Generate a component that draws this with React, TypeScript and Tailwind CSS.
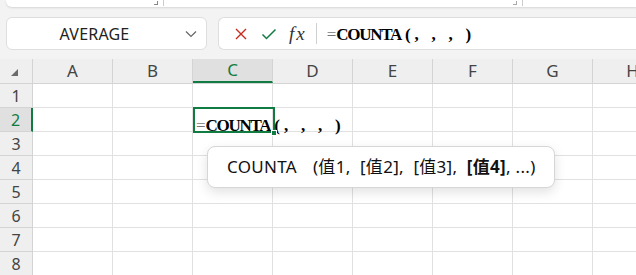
import React from "react";

const COLS = ["A", "B", "C", "D", "E", "F", "G", "H"];
const ROWS = [1, 2, 3, 4, 5, 6, 7, 8];

const SANS = "font-['Noto_Sans','Noto_Sans_CJK_SC',sans-serif]";
const SERIF = "font-['Liberation_Serif','Noto_Sans_CJK_SC',serif]";

function Formula() {
  return (
    <span className={`${SERIF} whitespace-nowrap text-[17px] leading-none text-black`}>
      <span className="font-normal text-[#777]">=</span>
      <span className="font-bold tracking-[-1.3px]">COUNTA</span>
      <span className="ml-[4px] font-bold">(</span>
      <span className="ml-[4px] inline-block w-[17px] font-bold">,</span>
      <span className="inline-block w-[17px] font-bold">,</span>
      <span className="inline-block w-[17px] font-bold">,</span>
      <span className="font-bold">)</span>
    </span>
  );
}

export default function App() {
  return (
    <div className={`relative h-[275px] w-[636px] overflow-hidden bg-[#f3f3f3] ${SANS}`}>
      {/* ribbon edge */}
      <div className="relative ml-[6px] h-[7px] rounded-bl-[6px] bg-white shadow-[0_1px_2px_rgba(0,0,0,0.12)]">
        <div className="absolute left-[148px] top-[1px] h-[4px] w-[4px] border-b border-r border-[#888]" />
        <div className="absolute left-[157px] top-0 h-[6px] w-px bg-[#ccc]" />
        <div className="absolute left-[507px] top-[1px] h-[4px] w-[4px] border-b border-r border-[#aaa]" />
        <div className="absolute left-[516px] top-0 h-[6px] w-px bg-[#ccc]" />
      </div>

      {/* name box + formula bar */}
      <div className="mt-[10px] flex h-[33px] gap-[11px] pl-[6px]">
        <div className="relative flex w-[201px] shrink-0 items-center justify-center rounded-[6px] border border-[#dedede] bg-white">
          <span className="ml-[-24px] text-[16px] tracking-[0.2px] text-[#222]">AVERAGE</span>
          <svg className="absolute right-[9px] top-[12px]" width="12" height="8" viewBox="0 0 12 8">
            <path d="M1 1.5 L6 6.5 L11 1.5" fill="none" stroke="#666" strokeWidth="1.2" />
          </svg>
        </div>
        <div className="flex flex-1 items-center rounded-l-[6px] border border-r-0 border-[#dedede] bg-white">
          <svg className="ml-[15px]" width="14" height="14" viewBox="0 0 14 14">
            <path d="M2 2 L12 12 M12 2 L2 12" stroke="#c42b1c" strokeWidth="1.4" fill="none" />
          </svg>
          <svg className="ml-[13px]" width="16" height="14" viewBox="0 0 16 14">
            <path d="M1.5 7.5 L5.5 11.5 L14.5 2.5" stroke="#107c41" strokeWidth="1.5" fill="none" />
          </svg>
          <span className="ml-[12px] font-['Liberation_Serif',serif] text-[19px] italic leading-none text-[#333]">
            f<span className="ml-[2px]">x</span>
          </span>
          <div className="ml-[11px] h-[21px] w-px bg-[#cfcfcf]" />
          <div className="ml-[10px] pt-[1px]">
            <Formula />
          </div>
        </div>
      </div>

      {/* grid */}
      <div className="mt-[9px]">
        <div className="flex h-[25px] border-b border-[#d4d4d4] bg-[#efefef]">
          <div className="relative w-[33px] shrink-0 border-r border-[#d4d4d4]">
            <svg className="absolute left-[11px] top-[10px]" width="7" height="7" viewBox="0 0 7 7">
              <path d="M7 0 L7 7 L0 7 Z" fill="#6b6b6b" />
            </svg>
          </div>
          {COLS.map((c) => (
            <div
              key={c}
              className={`flex w-[80px] shrink-0 items-center justify-center border-r border-[#d4d4d4] text-[17px] ${
                c === "C" ? "border-b-2 border-b-[#107c41] bg-[#e0e0e0] text-[#107c41]" : "text-[#444]"
              }`}
            >
              {c}
            </div>
          ))}
        </div>
        {ROWS.map((r) => (
          <div key={r} className="flex h-[24px]">
            <div
              className={`flex w-[33px] shrink-0 items-center justify-center border-b border-r border-[#d4d4d4] text-[16px] ${
                r === 2 ? "border-r-2 border-r-[#107c41] bg-[#e0e0e0] text-[#107c41]" : "bg-[#efefef] text-[#444]"
              }`}
            >
              {r}
            </div>
            {COLS.map((c) => (
              <div key={c} className="w-[80px] shrink-0 border-b border-r border-[#e1e1e1] bg-white" />
            ))}
          </div>
        ))}
      </div>

      {/* active cell C2 */}
      <div className="absolute left-[193px] top-[107px] h-[26px] w-[82px] border-2 border-[#107c41]" />
      <div className="absolute left-[196px] top-[113px]">
        <Formula />
      </div>
      <div className="absolute left-[271px] top-[130px] h-[6px] w-[6px] border border-white bg-[#107c41]" />

      {/* function tooltip */}
      <div className="absolute left-[207px] top-[146px] flex h-[42px] w-[348px] items-center rounded-[8px] border border-[#d6d6d6] bg-white pl-[19px] text-[17px] tracking-[0.3px] text-[#111] shadow-[0_4px_12px_rgba(0,0,0,0.12)]">
        <span>COUNTA</span>
        <span className="ml-[16px] whitespace-nowrap">
          (值1,&nbsp; [值2],&nbsp; [值3],&nbsp; <b>[值4]</b>, ...)
        </span>
      </div>
    </div>
  );
}
